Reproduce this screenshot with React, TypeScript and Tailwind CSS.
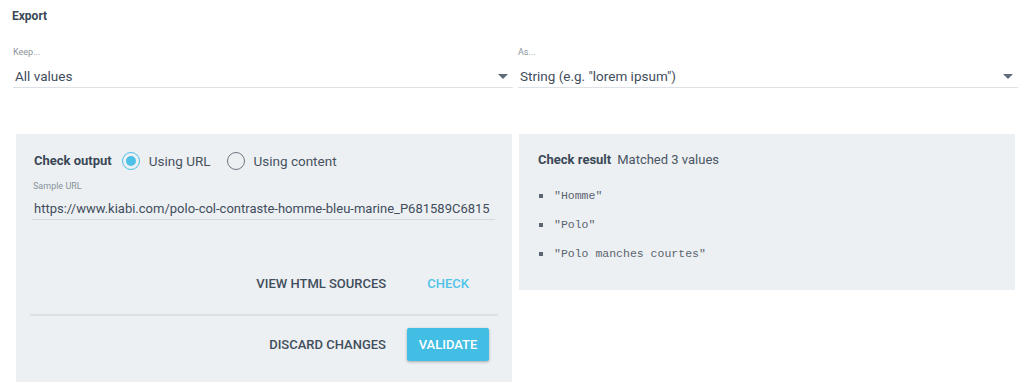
import React from "react";

const Caret = () => (
  <svg width="10" height="6" viewBox="0 0 10 6" className="shrink-0">
    <path d="M0 0h10L5 5z" fill="#5f6b78" />
  </svg>
);

function Select({ label, value }: { label: string; value: string }) {
  return (
    <div className="flex-1 flex flex-col">
      <div className="text-[9px] leading-[12px] text-[#8a939c] h-[12px]">{label}</div>
      <div className="mt-[8px] flex items-center justify-between pl-[2px] pr-[5px] h-[22px] border-b border-[#dde1e5]">
        <span className="text-[13.5px] text-[#3f4d5c]">{value}</span>
        <Caret />
      </div>
    </div>
  );
}

function Radio({ checked, label }: { checked: boolean; label: string }) {
  return (
    <label className="flex items-center gap-[9px]">
      <span
        className={
          checked
            ? "w-[18px] h-[18px] rounded-full border-[1.5px] border-[#4cc0e6] flex items-center justify-center"
            : "w-[18px] h-[18px] rounded-full border-[1.5px] border-[#6c7680]"
        }
      >
        {checked && <span className="w-[10px] h-[10px] rounded-full bg-[#4cc0e6]" />}
      </span>
      <span className="text-[13.5px] text-[#46535f]">{label}</span>
    </label>
  );
}

export default function App() {
  const values = ["Homme", "Polo", "Polo manches courtes"];
  return (
    <div
      className="w-[1024px] h-[388px] bg-white overflow-hidden"
      style={{ fontFamily: "Roboto, 'Liberation Sans', sans-serif" }}
    >
      <div className="pl-[12px] pt-[7px] h-[46px] text-[12px] font-bold text-[#3a4856]">Export</div>

      <div className="flex gap-[5px] pl-[13px] pr-[6px]">
        <Select label="Keep..." value="All values" />
        <Select label="As..." value={'String (e.g. "lorem ipsum")'} />
      </div>

      <div className="flex gap-[7px] pl-[16px] mt-[46px] items-start">
        {/* check output */}
        <div className="w-[496px] h-[248px] bg-[#edf0f3] px-[14px] flex flex-col">
          <div className="flex items-center gap-[10px] pl-[4px] mt-[18px] h-[18px]">
            <span className="text-[13px] font-bold text-[#3a4856]">Check output</span>
            <Radio checked label="Using URL" />
            <span className="ml-[6px]">
              <Radio checked={false} label="Using content" />
            </span>
          </div>
          <div className="pl-[3px] mt-[10px] text-[9px] leading-[12px] text-[#8a939c]">Sample URL</div>
          <div className="ml-[2px] mr-[3px] mt-[4px] h-[24px] border-b border-[#d4d9de] pl-[2px] overflow-hidden whitespace-nowrap">
            <span className="text-[13px] leading-[18px] text-[#3f4d5c]">
              https://www.kiabi.com/polo-col-contraste-homme-bleu-marine_P681589C6815
            </span>
          </div>
          <div className="flex justify-end items-center gap-[41px] mt-[53px] pr-[29px] h-[22px]">
            <span className="text-[13px] font-medium text-[#414e5b]">VIEW HTML SOURCES</span>
            <span className="text-[13px] font-medium text-[#4fc3e8]">CHECK</span>
          </div>
          <div className="mt-[19px] border-t-2 border-[#dde1e5]" />
          <div className="flex justify-end items-center gap-[21px] mt-[12px] pr-[9px]">
            <span className="text-[13px] font-medium text-[#414e5b]">DISCARD CHANGES</span>
            <button className="w-[82px] h-[33px] bg-[#42bde3] rounded-[2px] shadow-[0_1px_3px_rgba(0,0,0,0.3)] text-[13px] font-medium text-white">
              VALIDATE
            </button>
          </div>
        </div>

        {/* check result */}
        <div className="w-[496px] h-[156px] bg-[#edf0f3] pl-[19px] pt-[18px]">
          <div className="flex items-center gap-[6px] h-[16px]">
            <span className="text-[13px] font-bold text-[#3a4856]">Check result</span>
            <span className="text-[13px] text-[#4a5663]">Matched 3 values</span>
          </div>
          <ul className="mt-[22px] flex flex-col gap-[17px]">
            {values.map((v) => (
              <li key={v} className="flex items-center gap-[11px] h-[12px]">
                <span className="w-[4px] h-[4px] bg-[#5b6672] ml-[1px]" />
                <span
                  className="text-[11.5px] text-[#5a646f]"
                  style={{ fontFamily: "'Liberation Mono', monospace" }}
                >
                  "{v}"
                </span>
              </li>
            ))}
          </ul>
        </div>
      </div>
    </div>
  );
}
